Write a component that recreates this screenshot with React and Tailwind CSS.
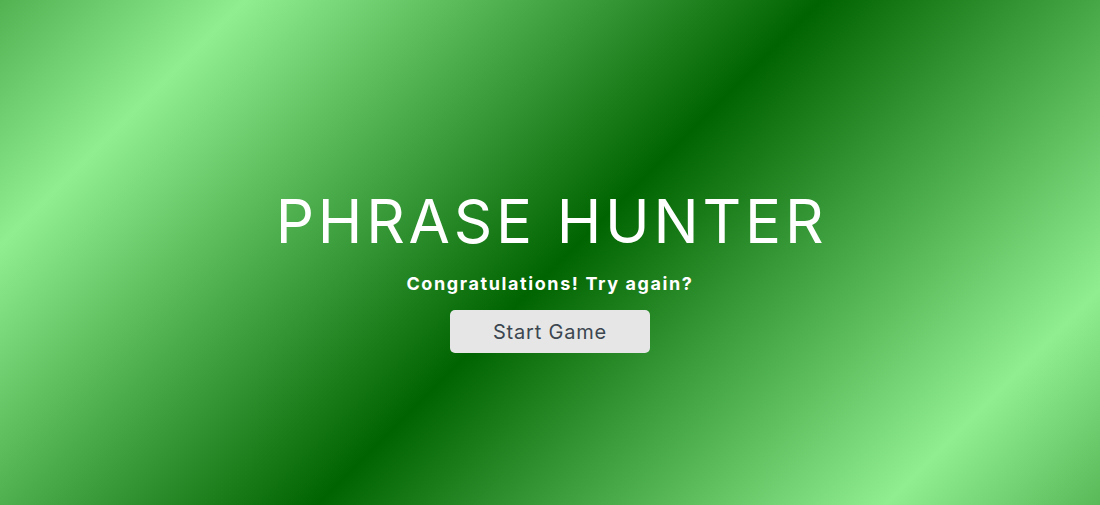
export default function App() {
  return (
    <div
      className="h-[505px] w-full flex flex-col items-center bg-[linear-gradient(135deg,#52b252_0%,#90ee90_15.3%,#006400_51.2%,#90ee90_86.6%,#59b959_100%)] pt-[184px]"
      style={{ fontFamily: "Inter, 'Open Sans', sans-serif" }}
    >
      <h1 className="text-white text-[60px] leading-[74px] font-normal tracking-[3.8px] pl-[3px]">
        PHRASE HUNTER
      </h1>
      <h2 className="text-white text-[18px] leading-[24px] font-bold tracking-[1.6px] mt-[14px]">
        Congratulations! Try again?
      </h2>
      <button className="mt-[14px] w-[200px] h-[43px] rounded-[5px] bg-[#e6e6e6] text-[#3b4650] text-[20px] tracking-[0.8px]">
        Start Game
      </button>
    </div>
  );
}
